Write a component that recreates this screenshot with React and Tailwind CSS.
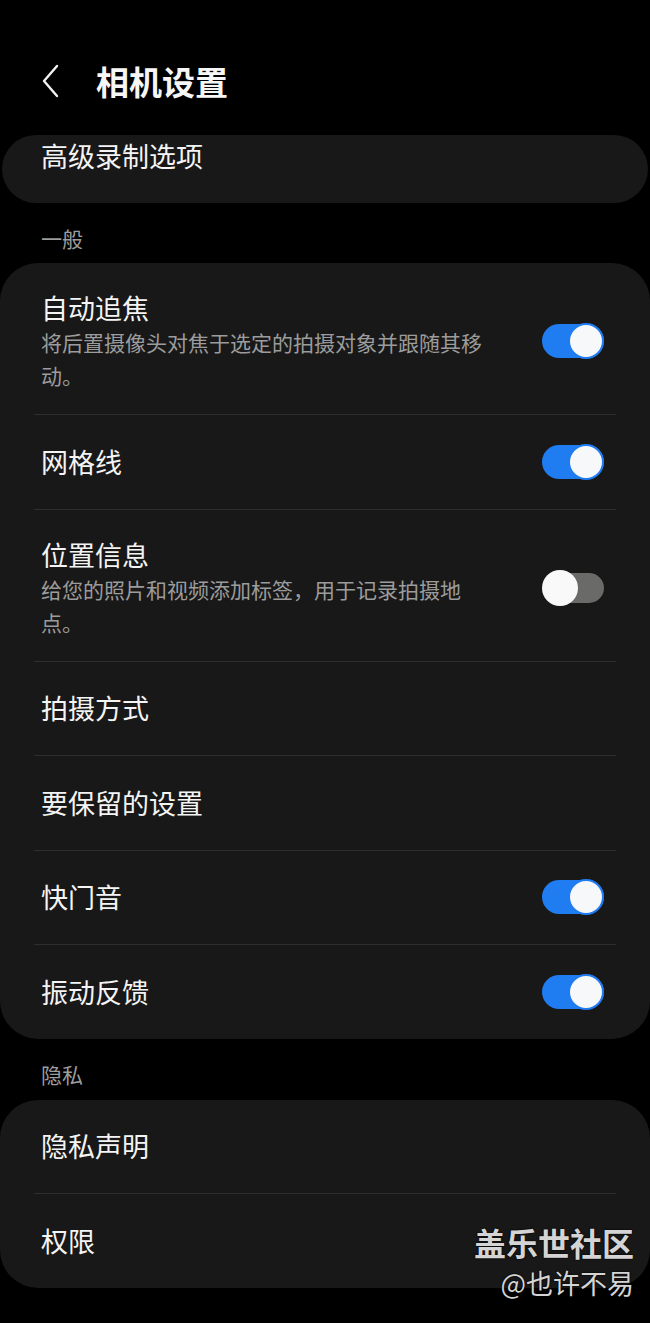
import React from 'react';

// --- Icônes ---
const BackIcon = () => (
  <svg width="22" height="34" viewBox="0 0 22 34" fill="none" stroke="#f2f2f2" strokeWidth="2.4" strokeLinecap="round" strokeLinejoin="round">
    <polyline points="17,2 4,17 17,32" />
  </svg>
);

const Toggle = ({ on }) => (
  <div className="relative w-[62px] h-[36px] shrink-0">
    {on ? (
      <>
        <div className="absolute left-0 right-0 top-[1px] bottom-[1px] rounded-full bg-[#1f7cf1]" />
        <div className="absolute right-0 top-0 w-[36px] h-[36px] rounded-full bg-[#f7f8fa] border-[2px] border-[#1f7cf1]" />
      </>
    ) : (
      <>
        <div className="absolute left-[14px] right-0 top-[3px] bottom-[3px] rounded-full bg-[#6a6a68]" />
        <div className="absolute left-0 top-0 w-[36px] h-[36px] rounded-full bg-[#f9f9f9]" />
      </>
    )}
  </div>
);

const Divider = () => <div className="mx-[34px] h-px bg-[#2e2e2e]" />;

const Row = ({ title, desc, toggle }) => (
  <div className={`flex items-center pl-[41px] pr-[46px] ${desc ? 'pt-[27px] pb-[22px]' : 'h-[93.5px]'}`}>
    <div className="flex-1 min-w-0 pr-[48px]">
      <div className="text-[27px] leading-[36px] text-[#f4f4f4]">{title}</div>
      {desc && <div className="text-[21px] leading-[33px] text-[#9c9c9c]">{desc}</div>}
    </div>
    {toggle !== undefined && <Toggle on={toggle} />}
  </div>
);

const Section = ({ label, className }) => (
  <div className={`pl-[41px] text-[21px] leading-[26px] text-[#9d9d9d] ${className}`}>{label}</div>
);

const general = [
  { title: '自动追焦', desc: '将后置摄像头对焦于选定的拍摄对象并跟随其移动。', toggle: true },
  { title: '网格线', toggle: true },
  { title: '位置信息', desc: '给您的照片和视频添加标签，用于记录拍摄地点。', toggle: false },
  { title: '拍摄方式' },
  { title: '要保留的设置' },
  { title: '快门音', toggle: true },
  { title: '振动反馈', toggle: true },
];

const privacy = [{ title: '隐私声明' }, { title: '权限' }];

const App = () => {
  return (
    <div
      className="relative w-[650px] h-[1323px] overflow-hidden bg-black"
      style={{ fontFamily: '"Noto Sans CJK SC", "Noto Sans", sans-serif' }}
    >
      {/* HEADER */}
      <header className="h-[135px] flex items-start pt-[63px] pl-[40px]">
        <div className="h-[36px] flex items-center">
          <BackIcon />
        </div>
        <h1 className="ml-[34px] text-[33px] leading-[36px] font-bold text-[#f6f6f6]">相机设置</h1>
      </header>

      {/* Carte partiellement défilée */}
      <div className="mx-[2px] h-[68px] rounded-[34px] bg-[#181818] pl-[39px] pt-[3px]">
        <div className="text-[27px] leading-[36px] text-[#f4f4f4]">高级录制选项</div>
      </div>

      <Section label="一般" className="pt-[22px] pb-[12px]" />

      <div className="rounded-[38px] bg-[#181818]">
        {general.map((item, i) => (
          <React.Fragment key={item.title}>
            {i > 0 && <Divider />}
            <Row {...item} />
          </React.Fragment>
        ))}
      </div>

      <Section label="隐私" className="pt-[22px] pb-[13px]" />

      <div className="rounded-[38px] bg-[#181818]">
        {privacy.map((item, i) => (
          <React.Fragment key={item.title}>
            {i > 0 && <Divider />}
            <Row {...item} />
          </React.Fragment>
        ))}
      </div>

      {/* Filigrane */}
      <div className="absolute right-[16px] top-[1224px] flex flex-col items-end text-[#d4d4d4]" style={{ textShadow: '0 0 2px #000, 0 0 1px #000' }}>
        <div className="text-[32px] leading-[36px] font-bold">盖乐世社区</div>
        <div className="text-[27px] leading-[34px] mt-[6px]">@也许不易</div>
      </div>
    </div>
  );
};

export default App;
